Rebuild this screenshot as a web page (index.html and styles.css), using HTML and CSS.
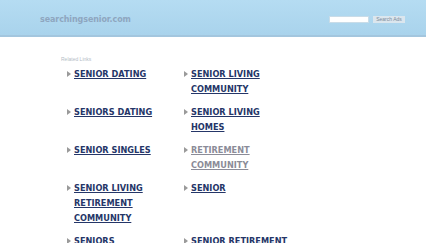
FILE: index.html
```html
<!DOCTYPE html>
<html>
<head>
<meta charset="utf-8">
<link rel="stylesheet" href="styles.css">
</head>
<body>
<div class="header">
  <div class="domain">searchingsenior.com</div>
  <div class="search">
    <span class="input"></span>
    <span class="btn">Search Ads</span>
  </div>
</div>
<div class="content">
  <div class="related">Related Links</div>
  <div class="links">
    <div class="item"><span class="arrow"></span><a href="#">SENIOR DATING</a></div>
    <div class="item"><span class="arrow"></span><a href="#">SENIOR LIVING COMMUNITY</a></div>
    <div class="item"><span class="arrow"></span><a href="#">SENIORS DATING</a></div>
    <div class="item"><span class="arrow"></span><a href="#">SENIOR LIVING HOMES</a></div>
    <div class="item"><span class="arrow"></span><a href="#">SENIOR SINGLES</a></div>
    <div class="item"><span class="arrow"></span><a href="#" class="visited">RETIREMENT COMMUNITY</a></div>
    <div class="item"><span class="arrow"></span><a href="#">SENIOR LIVING RETIREMENT COMMUNITY</a></div>
    <div class="item"><span class="arrow"></span><a href="#">SENIOR</a></div>
    <div class="item"><span class="arrow"></span><a href="#">SENIORS</a></div>
    <div class="item"><span class="arrow"></span><a href="#">SENIOR RETIREMENT</a></div>
  </div>
</div>
</body>
</html>
```
FILE: styles.css
```css
html, body {
  margin: 0;
  padding: 0;
  background: #ffffff;
  overflow: hidden;
  font-family: "DejaVu Sans", Verdana, sans-serif;
}
.header {
  width: 426px;
  height: 35px;
  background: linear-gradient(#b5dcf2, #a9d3ec);
  border-bottom: 2px solid #a3c6de;
  display: flex;
  align-items: center;
  justify-content: space-between;
  box-sizing: content-box;
}
.domain {
  margin-left: 40px;
  margin-top: 3px;
  font-size: 8px;
  font-weight: bold;
  color: #8ea6bf;
  letter-spacing: -0.1px;
}
.search {
  display: flex;
  align-items: center;
  gap: 4px;
  margin-right: 21px;
  margin-top: 3px;
}
.input {
  width: 38px;
  height: 5px;
  background: #ffffff;
  border: 1px solid #c9dce8;
}
.btn {
  width: 32px;
  height: 7px;
  background: #dbe6ee;
  color: #7a8a99;
  font-size: 5px;
  line-height: 7px;
  text-align: center;
  font-family: "Liberation Sans", Arial, sans-serif;
}
.content {
  padding-left: 61px;
  padding-top: 19px;
}
.related {
  font-size: 5px;
  line-height: 6px;
  color: #b4bcc6;
  font-family: "Liberation Sans", Arial, sans-serif;
}
.links {
  display: grid;
  grid-template-columns: 117px 117px;
  row-gap: 8px;
  margin-left: 6px;
  margin-top: 5px;
}
.item {
  display: flex;
  align-items: flex-start;
}
.arrow {
  flex: none;
  width: 0;
  height: 0;
  margin-top: 4px;
  margin-right: 3px;
  border-top: 3px solid transparent;
  border-bottom: 3px solid transparent;
  border-left: 4px solid #9a9a9a;
}
.item a {
  font-size: 8.2px;
  line-height: 15px;
  font-weight: bold;
  color: #253668;
  text-decoration: underline;
  max-width: 105px;
}
.item a.visited {
  color: #8b8c98;
}
```
